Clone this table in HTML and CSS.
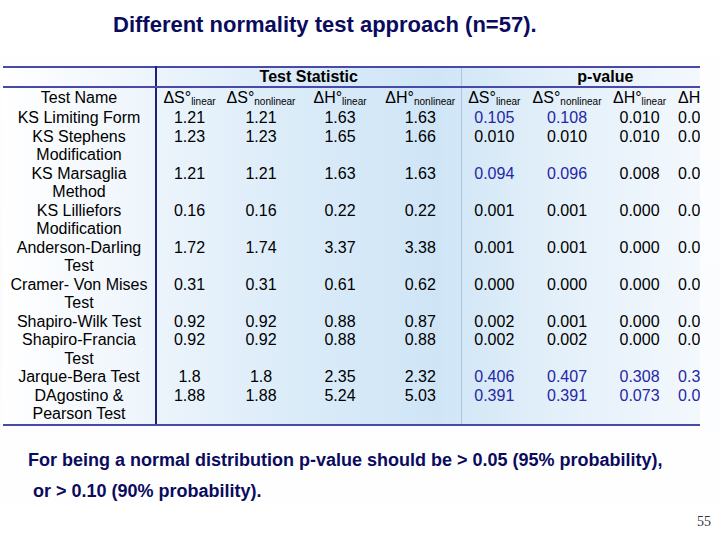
FILE: index.html
```html
<!DOCTYPE html>
<html>
<head>
<meta charset="utf-8">
<link rel="stylesheet" href="styles.css">
</head>
<body>
<div class="slide">
  <h1 class="title">Different normality test approach (n=57).</h1>
  <div class="table-wrap">
    <table class="data">
      <colgroup>
        <col class="c1"><col class="c2"><col class="c3"><col class="c4"><col class="c5">
        <col class="c6"><col class="c7"><col class="c8"><col class="c9">
      </colgroup>
      <thead>
        <tr class="group">
          <th class="name"></th>
          <th colspan="4" class="stat-end">Test Statistic</th>
          <th colspan="4">p-value</th>
        </tr>
        <tr class="sub">
          <th class="name">Test Name</th>
          <th>ΔS°<sub>linear</sub></th>
          <th>ΔS°<sub>nonlinear</sub></th>
          <th>ΔH°<sub>linear</sub></th>
          <th class="stat-end">ΔH°<sub>nonlinear</sub></th>
          <th>ΔS°<sub>linear</sub></th>
          <th>ΔS°<sub>nonlinear</sub></th>
          <th>ΔH°<sub>linear</sub></th>
          <th class="last">ΔH°<sub>nonlinear</sub></th>
        </tr>
      </thead>
      <tbody>
        <tr><td class="name">KS Limiting Form</td><td>1.21</td><td>1.21</td><td>1.63</td><td class="stat-end">1.63</td><td class="hi">0.105</td><td class="hi">0.108</td><td>0.010</td><td class="last">0.010</td></tr>
        <tr><td class="name">KS Stephens<br>Modification</td><td>1.23</td><td>1.23</td><td>1.65</td><td class="stat-end">1.66</td><td>0.010</td><td>0.010</td><td>0.010</td><td class="last">0.010</td></tr>
        <tr><td class="name">KS Marsaglia<br>Method</td><td>1.21</td><td>1.21</td><td>1.63</td><td class="stat-end">1.63</td><td class="hi">0.094</td><td class="hi">0.096</td><td>0.008</td><td class="last">0.008</td></tr>
        <tr><td class="name">KS Lilliefors<br>Modification</td><td>0.16</td><td>0.16</td><td>0.22</td><td class="stat-end">0.22</td><td>0.001</td><td>0.001</td><td>0.000</td><td class="last">0.000</td></tr>
        <tr><td class="name">Anderson-Darling<br>Test</td><td>1.72</td><td>1.74</td><td>3.37</td><td class="stat-end">3.38</td><td>0.001</td><td>0.001</td><td>0.000</td><td class="last">0.000</td></tr>
        <tr><td class="name">Cramer- Von Mises<br>Test</td><td>0.31</td><td>0.31</td><td>0.61</td><td class="stat-end">0.62</td><td>0.000</td><td>0.000</td><td>0.000</td><td class="last">0.000</td></tr>
        <tr><td class="name">Shapiro-Wilk Test</td><td>0.92</td><td>0.92</td><td>0.88</td><td class="stat-end">0.87</td><td>0.002</td><td>0.001</td><td>0.000</td><td class="last">0.000</td></tr>
        <tr><td class="name">Shapiro-Francia<br>Test</td><td>0.92</td><td>0.92</td><td>0.88</td><td class="stat-end">0.88</td><td>0.002</td><td>0.002</td><td>0.000</td><td class="last">0.000</td></tr>
        <tr><td class="name">Jarque-Bera Test</td><td>1.8</td><td>1.8</td><td>2.35</td><td class="stat-end">2.32</td><td class="hi">0.406</td><td class="hi">0.407</td><td class="hi">0.308</td><td class="last hi">0.308</td></tr>
        <tr><td class="name">DAgostino &amp;<br>Pearson Test</td><td>1.88</td><td>1.88</td><td>5.24</td><td class="stat-end">5.03</td><td class="hi">0.391</td><td class="hi">0.391</td><td class="hi">0.073</td><td class="last hi">0.073</td></tr>
      </tbody>
    </table>
  </div>
  <p class="note">For being a normal distribution p-value should be &gt; 0.05 (95% probability),</p>
  <p class="note note2">or &gt; 0.10 (90% probability).</p>
  <div class="page-num">55</div>
</div>
</body>
</html>
```

FILE: styles.css
```css
html, body {
  margin: 0;
  padding: 0;
  background: #ffffff;
}

.slide {
  width: 720px;
  height: 540px;
  display: flex;
  flex-direction: column;
  font-family: "Liberation Sans", Arial, sans-serif;
  background: linear-gradient(180deg, #ffffff 0%, #fbfcfe 60%, #ffffff 100%);
}

.title {
  margin: 12px 0 0 113px;
  font-size: 22px;
  line-height: 26px;
  font-weight: bold;
  color: #0b0b5e;
}

.table-wrap {
  margin: 28px 0 0 3px;
  width: 697px;
  overflow: hidden;
  background: linear-gradient(90deg, #ffffff 0%, #f0f6fc 18%, #dcecf9 40%, #cfe5f6 62%, #e2eff9 78%, #f3f8fd 100%);
}

.data {
  border-collapse: collapse;
  table-layout: fixed;
  width: 746px;
  color: #000;
  font-size: 16px;
}

.c1 { width: 153px; }
.c2 { width: 66px; }
.c3 { width: 78px; }
.c4 { width: 80px; }
.c5 { width: 81px; }
.c6 { width: 66px; }
.c7 { width: 80px; }
.c8 { width: 65px; }
.c9 { width: 77px; }

.data th,
.data td {
  padding: 0;
  text-align: center;
  white-space: nowrap;
  vertical-align: top;
}

.data thead tr.group th {
  height: 18px;
  line-height: 18px;
  font-size: 16px;
  font-weight: bold;
  border-top: 2px solid #4848ad;
  border-bottom: 2px solid #4848ad;
}

.data thead tr.sub th {
  height: 21px;
  line-height: 20px;
  font-weight: normal;
  font-size: 16px;
}

.data sub {
  font-size: 10px;
  vertical-align: -2px;
  line-height: 0;
}

.data tbody td {
  line-height: 18.5px;
}

.data tbody tr:last-child td {
  border-bottom: 2px solid #4848ad;
}

.data .name {
  border-right: 2px solid #1f1f78;
}

.data .stat-end {
  border-right: 1px solid #a9c6e4;
}

.data .last {
  text-align: left;
  padding-left: 6px;
}

.data .hi {
  color: #2626a6;
}

.note {
  margin: 23px 0 0 28px;
  font-size: 18px;
  line-height: 22px;
  font-weight: bold;
  color: #0b0b5e;
}

.note2 {
  margin: 9px 0 0 33px;
}

.page-num {
  margin: 12px 0 0 697px;
  font-family: "Liberation Serif", "Times New Roman", serif;
  font-size: 14px;
  line-height: 16px;
  color: #333;
}
```
